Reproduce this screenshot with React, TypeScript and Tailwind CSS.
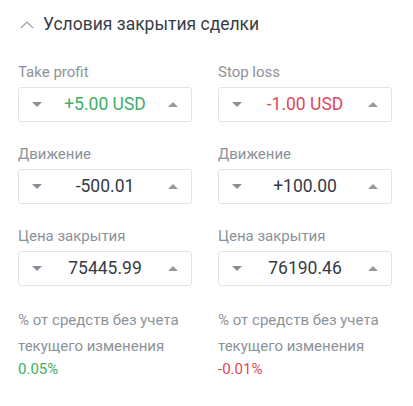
import React from "react";

type Field = {
  label: string;
  value: string;
  tone?: "up" | "down";
};

const left: Field[] = [
  { label: "Take profit", value: "+5.00 USD", tone: "up" },
  { label: "Движение", value: "-500.01" },
  { label: "Цена закрытия", value: "75445.99" },
];

const right: Field[] = [
  { label: "Stop loss", value: "-1.00 USD", tone: "down" },
  { label: "Движение", value: "+100.00" },
  { label: "Цена закрытия", value: "76190.46" },
];

function Arrow({ up = false }: { up?: boolean }) {
  return (
    <svg width="10" height="5" viewBox="0 0 10 5" className="shrink-0">
      {up ? (
        <path d="M0 5 L5 0 L10 5 Z" fill="#959aa2" />
      ) : (
        <path d="M0 0 L10 0 L5 5 Z" fill="#8a8f98" />
      )}
    </svg>
  );
}

function Stepper({ label, value, tone }: Field) {
  const color =
    tone === "up"
      ? "text-[#3fae66]"
      : tone === "down"
        ? "text-[#e0475c]"
        : "text-[#363b46]";
  return (
    <div className="mb-[22px]">
      <div className="mb-[5px] text-[15px] leading-[20px] text-[#8d929a]">{label}</div>
      <div className="flex h-[35px] items-center justify-between rounded-[3px] border border-[#e2e4e8] px-[13px]">
        <Arrow />
        <span className={`text-[17.5px] leading-none ${color}`}>{value}</span>
        <Arrow up />
      </div>
    </div>
  );
}

function Column({ fields, pct, pctUp }: { fields: Field[]; pct: string; pctUp: boolean }) {
  return (
    <div className="flex flex-col">
      {fields.map((f, i) => (
        <Stepper key={i} {...f} />
      ))}
      <p className="-mt-[1px] text-[15px] leading-[26px] text-[#8d929a]">
        % от средств без учета
        <br />
        текущего изменения
      </p>
      <div className={`text-[15px] leading-[20px] ${pctUp ? "text-[#3fae66]" : "text-[#e0475c]"}`}>
        {pct}
      </div>
    </div>
  );
}

export default function App() {
  return (
    <div className="h-[406px] w-[413px] overflow-hidden bg-white pl-[18px] pr-[21px] pt-[12px] font-['Roboto',sans-serif]">
      {/* Section header */}
      <div className="flex h-[24px] items-center">
        <svg width="14" height="9" viewBox="0 0 14 9" className="ml-[2px] mr-[9px]">
          <path d="M1 8 L7 2 L13 8" fill="none" stroke="#a3a7ae" strokeWidth="1.4" />
        </svg>
        <span className="text-[17.5px] leading-[24px] text-[#383d47]">Условия закрытия сделки</span>
      </div>

      <div className="mt-[26px] grid grid-cols-2 gap-x-[26px]">
        <Column fields={left} pct="0.05%" pctUp />
        <Column fields={right} pct="-0.01%" pctUp={false} />
      </div>
    </div>
  );
}
